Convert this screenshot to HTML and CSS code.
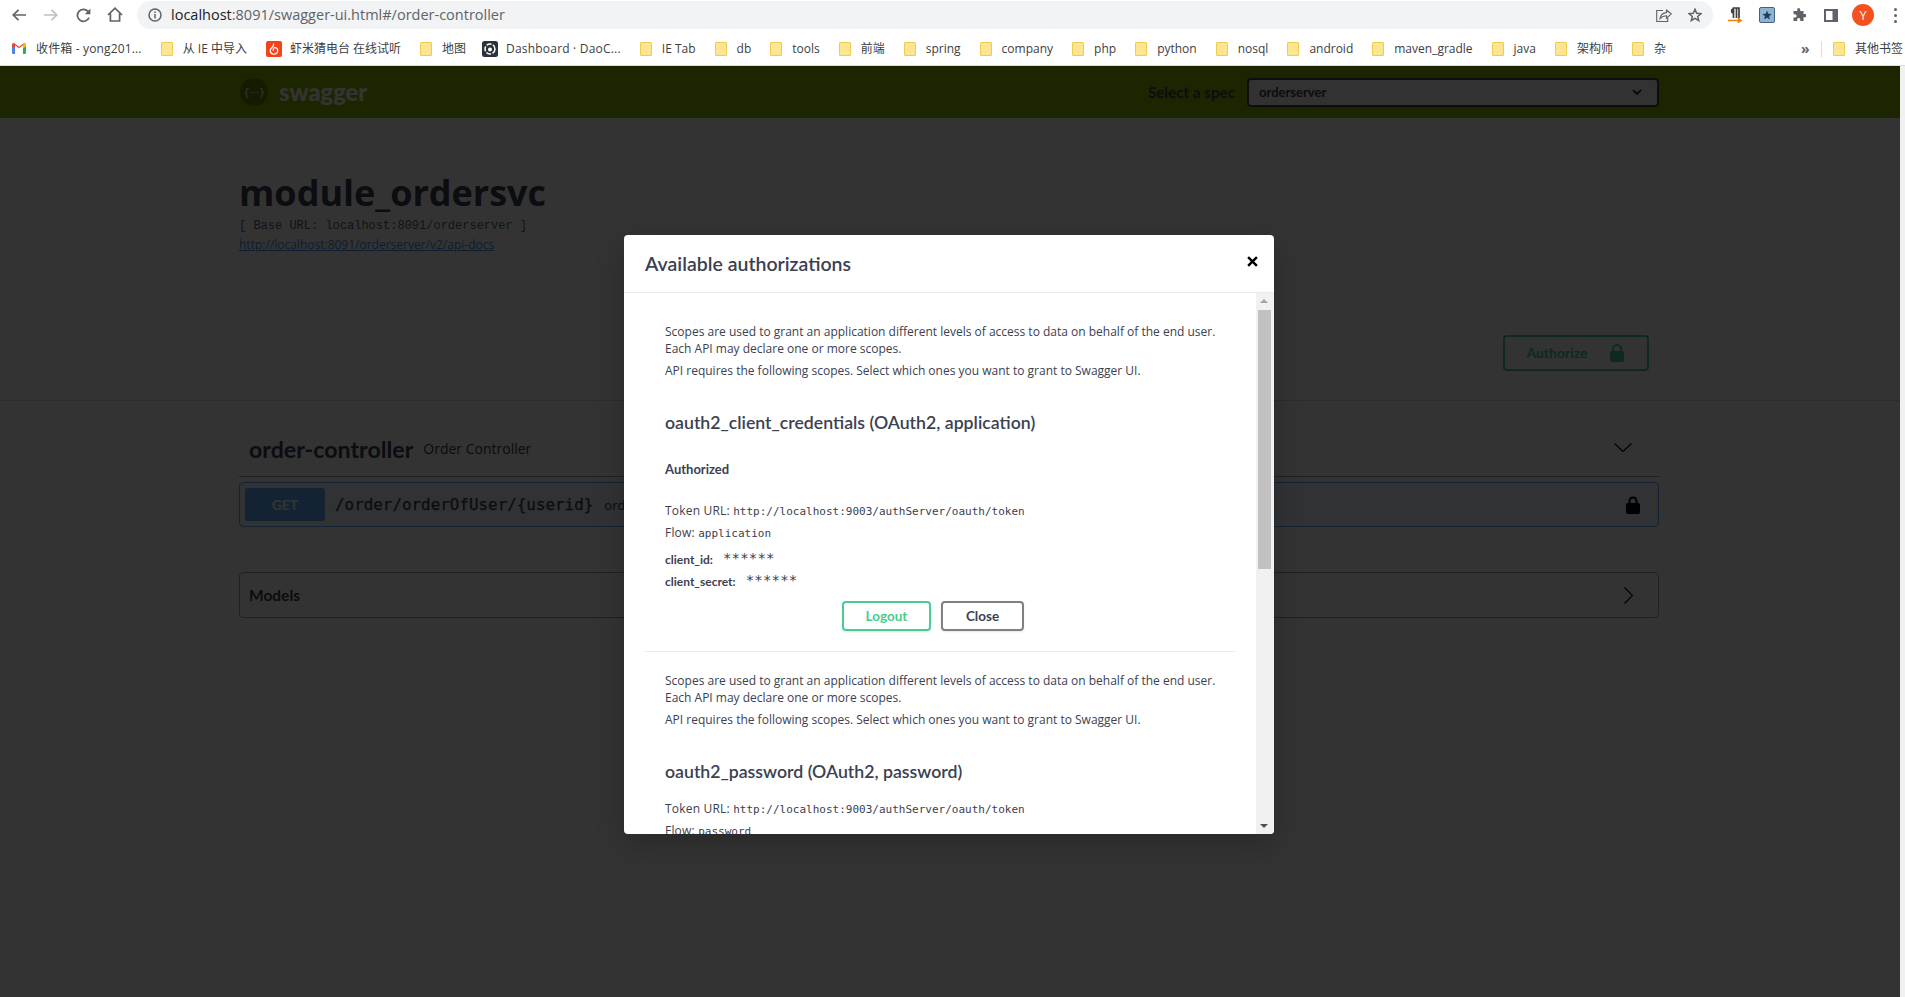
FILE: index.html
```html
<!DOCTYPE html>
<html lang="en">
<head>
<meta charset="utf-8">
<title>Swagger UI</title>
<link rel="stylesheet" href="styles.css">
</head>
<body>
<div class="browser">
  <header class="toolbar">
    <svg class="nav nav-back" viewBox="0 0 14 12"><path d="M14 6H1.5M6.5 .8 1.2 6l5.3 5.2" fill="none" stroke="#5f6368" stroke-width="1.7"/></svg>
    <svg class="nav nav-fwd" viewBox="0 0 14 12"><path d="M0 6h12.5M7.5 .8 12.8 6l-5.3 5.2" fill="none" stroke="#bdc1c6" stroke-width="1.7"/></svg>
    <svg class="nav nav-reload" viewBox="0 0 15 15"><path d="M13 9.600A6 6 0 1 1 11.800 3.200L13.600 5" fill="none" stroke="#5f6368" stroke-width="1.7"/><path d="M14.400 .6v5.600H8.800z" fill="#5f6368"/></svg>
    <svg class="nav nav-home" viewBox="0 0 16 15"><path d="M1 8 8 1.200 15 8M3.400 6.400V14h9.200V6.400" fill="none" stroke="#5f6368" stroke-width="1.7"/></svg>
    <div class="omnibox">
      <svg class="omni-info" viewBox="0 0 14 14"><circle cx="7" cy="7" r="6" fill="none" stroke="#5f6368" stroke-width="1.5"/><path d="M7 6v4.400M7 3.400v1.500" stroke="#5f6368" stroke-width="1.5"/></svg>
      <span class="url"><span class="url-host">localhost</span>:8091/swagger-ui.html#/order-controller</span>
      <svg class="omni-share" viewBox="0 0 16 13"><path d="M7 1.500H.7v11h11V9" fill="none" stroke="#5f6368" stroke-width="1.100"/><path d="M10.500 1v2.600C6.500 3.800 4.600 6 4 9.600 6 7.300 7.700 6.600 10.500 6.700v2.500L15.300 5z" fill="none" stroke="#5f6368" stroke-width="1.100"/></svg>
      <svg class="omni-star" viewBox="0 0 14 14"><path d="M7 1.300 8.700 5.200l4.200.4-3.200 2.800 1 4.200L7 10.400l-3.700 2.200 1-4.200L1.100 5.600l4.200-.4z" fill="none" stroke="#5f6368" stroke-width="1.500"/></svg>
    </div>
    <div class="ext-icons">
      <svg class="ext ext-para" viewBox="0 0 14 16"><path d="M5.500 11V1H11V11M8.500 1V11" fill="none" stroke="#3c4043" stroke-width="1.700"/><path d="M5.500 1.200a2.700 2.700 0 0 0 0 5.400z" fill="#3c4043"/><path d="M0 13.500h12M9.800 11.300 13 13.500l-3.200 2.200" fill="none" stroke="#f57c00" stroke-width="1.600"/></svg>
      <svg class="ext ext-fav" viewBox="0 0 16 16"><rect x=".5" y=".5" width="15" height="15" rx="1.500" fill="#8fb4cf" stroke="#48617a"/><path d="M8 3.600 9.300 6.700l3.300.3-2.500 2.200.8 3.300L8 10.700l-2.900 1.800.8-3.300L3.400 7l3.300-.3z" fill="#1d3f63"/></svg>
      <svg class="ext ext-puzzle" viewBox="0 0 14 14"><path d="M5.200 1.500a1.500 1.500 0 0 1 3 0V3h3.300v3.100H13a1.600 1.600 0 0 1 0 3.200h-1.500V13H8.300v-1.500a1.600 1.600 0 0 0-3.200 0V13H1.500V9.500H3a1.600 1.600 0 0 0 0-3.200H1.500V3h3.700z" fill="#5f6368"/></svg>
      <svg class="ext ext-side" viewBox="0 0 14 13"><rect x="1" y="1" width="12" height="11" fill="none" stroke="#5f6368" stroke-width="2"/><rect x="8.500" y="1" width="4.500" height="11" fill="#5f6368"/></svg>
      <span class="avatar">Y</span>
      <span class="dots"><i></i><i></i><i></i></span>
    </div>
  </header>

  <nav class="bookmarks">
    <div class="bm">
      <svg class="bm-ico gmail" viewBox="0 0 14 11"><path d="M0 2.500V9.800C0 10.500.5 11 1 11h2V5.200z" fill="#4285f4"/><path d="M14 2.500V9.800c0 .7-.5 1.200-1 1.200h-2V5.200z" fill="#34a853"/><path d="M0 1.800C0 .4 1.600-.4 2.700.4L7 3.800 11.300.4C12.400-.4 14 .4 14 1.800v1.400L11 5.400V2.200L7 5.200 3 2.200v3.200L0 3.200z" fill="#ea4335"/><path d="M11 2.200v3.200l3-2.200V1.800C14 .4 12.400-.4 11.300.4z" fill="#fbbc04"/></svg>
      <span class="bm-text bm-mail">收件箱 - yong201...</span>
    </div>
    <div class="bm"><i class="folder"></i><span class="bm-text">从 IE 中导入</span></div>
    <div class="bm">
      <svg class="bm-ico site" viewBox="0 0 16 16"><rect width="16" height="16" rx="2" fill="#f5431b"/><path d="M7.500 2.500C9 5 5 6 4.300 9c-.5 2.400 1.500 4.200 3.700 4.200s4-1.800 3.700-4c-.2-1.700-1.700-2.800-3-2.500-1.400.3-2 2-1.200 3.200" fill="none" stroke="#fff" stroke-width="1.200"/></svg>
      <span class="bm-text">虾米猜电台 在线试听</span>
    </div>
    <div class="bm"><i class="folder"></i><span class="bm-text">地图</span></div>
    <div class="bm bm-dash">
      <svg class="bm-ico site" viewBox="0 0 16 16"><rect width="16" height="16" rx="2.500" fill="#2b343e"/><circle cx="8" cy="8" r="5" fill="none" stroke="#fff" stroke-width="1.500" stroke-dasharray="5 1.500"/><circle cx="8" cy="8.500" r="2" fill="#fff"/></svg>
      <span class="bm-text">Dashboard · DaoC...</span>
    </div>
    <div class="bm"><i class="folder"></i><span class="bm-text">IE Tab</span></div>
    <div class="bm"><i class="folder"></i><span class="bm-text">db</span></div>
    <div class="bm"><i class="folder"></i><span class="bm-text">tools</span></div>
    <div class="bm"><i class="folder"></i><span class="bm-text">前端</span></div>
    <div class="bm"><i class="folder"></i><span class="bm-text">spring</span></div>
    <div class="bm"><i class="folder"></i><span class="bm-text">company</span></div>
    <div class="bm"><i class="folder"></i><span class="bm-text">php</span></div>
    <div class="bm"><i class="folder"></i><span class="bm-text">python</span></div>
    <div class="bm"><i class="folder"></i><span class="bm-text">nosql</span></div>
    <div class="bm"><i class="folder"></i><span class="bm-text">android</span></div>
    <div class="bm"><i class="folder"></i><span class="bm-text">maven_gradle</span></div>
    <div class="bm"><i class="folder"></i><span class="bm-text">java</span></div>
    <div class="bm"><i class="folder"></i><span class="bm-text">架构师</span></div>
    <div class="bm"><i class="folder"></i><span class="bm-text">杂</span></div>
    <div class="bm-end">
      <span class="more">»</span>
      <span class="bm-sep"></span>
      <div class="bm"><i class="folder"></i><span class="bm-text">其他书签</span></div>
    </div>
  </nav>

  <div class="viewport">
    <main class="page">
      <div class="topbar">
        <div class="topbar-inner">
          <div class="logo">
            <span class="logo-mark">{···}</span>
            <span class="logo-text">swagger</span>
          </div>
          <div class="spec">
            <span class="spec-label">Select a spec</span>
            <div class="spec-select">
              <span>orderserver</span>
              <svg class="spec-chev" viewBox="0 0 10 6"><path d="M1 1l4 4 4-4" fill="none" stroke="#000" stroke-width="1.500"/></svg>
            </div>
          </div>
        </div>
      </div>

      <div class="wrap">
        <section class="info">
          <h1 class="title">module_ordersvc</h1>
          <div class="base-url">[ Base URL: localhost:8091/orderserver ]</div>
          <a class="doc-link" href="#">http://localhost:8091/orderserver/v2/api-docs</a>
        </section>
      </div>

      <section class="schemes">
        <div class="wrap schemes-inner">
          <button class="authorize">
            <span>Authorize</span>
            <svg class="lock-ico" viewBox="0 0 14 18"><path d="M3 8V5a4 4 0 0 1 8 0v3" fill="none" stroke="#49cc90" stroke-width="2"/><rect y="7" width="14" height="11" rx="2" fill="#49cc90"/></svg>
          </button>
        </div>
      </section>

      <div class="wrap">
        <div class="tag">
          <span class="tag-name">order-controller</span>
          <span class="tag-desc">Order Controller</span>
          <svg class="tag-chev" viewBox="0 0 18 9"><path d="M.5.500 9 8.500 17.500.500" fill="none" stroke="#000" stroke-width="1.200"/></svg>
        </div>
        <div class="opblock">
          <span class="method">GET</span>
          <span class="path">/order/orderOfUser/{userid}</span>
          <span class="summary">ord</span>
          <svg class="op-lock" viewBox="0 0 14 18"><path d="M3.500 8V5a3.500 3.500 0 0 1 7 0v3" fill="none" stroke="#000" stroke-width="2"/><rect y="7" width="14" height="11" rx="2" fill="#000"/></svg>
        </div>
        <div class="models">
          <span class="models-name">Models</span>
          <svg class="models-chev" viewBox="0 0 9 17"><path d="M.5.500 8.500 8.500.5 16.500" fill="none" stroke="#000" stroke-width="1.200"/></svg>
        </div>
      </div>
    </main>
    <div class="page-scroll"></div>

    <div class="overlay">
      <div class="modal">
        <div class="modal-head">
          <h3 class="modal-title">Available authorizations</h3>
          <svg class="modal-close" viewBox="0 0 10 10"><path d="M1 1l8 8M9 1 1 9" stroke="#000" stroke-width="2.200"/></svg>
        </div>
        <div class="modal-body">
          <div class="modal-scroll">
            <div class="auth">
              <p class="desc">Scopes are used to grant an application different levels of access to data on behalf of the end user.<br>Each API may declare one or more scopes.</p>
              <p class="desc desc-next">API requires the following scopes. Select which ones you want to grant to Swagger UI.</p>
              <h4 class="auth-name">oauth2_client_credentials (OAuth2, application)</h4>
              <h6 class="authorized">Authorized</h6>
              <p class="line line-token">Token URL: <code>http://localhost:9003/authServer/oauth/token</code></p>
              <p class="line line-flow">Flow: <code>application</code></p>
              <p class="cred cred-first"><b>client_id:</b> <code>******</code></p>
              <p class="cred"><b>client_secret:</b> <code>******</code></p>
              <div class="auth-btns">
                <button class="btn btn-logout">Logout</button>
                <button class="btn btn-close">Close</button>
              </div>
            </div>
            <div class="auth auth-second">
              <p class="desc">Scopes are used to grant an application different levels of access to data on behalf of the end user.<br>Each API may declare one or more scopes.</p>
              <p class="desc desc-next">API requires the following scopes. Select which ones you want to grant to Swagger UI.</p>
              <h4 class="auth-name">oauth2_password (OAuth2, password)</h4>
              <p class="line line-token-b">Token URL: <code>http://localhost:9003/authServer/oauth/token</code></p>
              <p class="line line-flow">Flow: <code>password</code></p>
            </div>
          </div>
          <div class="scrollbar">
            <span class="sb-arrow sb-up"></span>
            <div class="sb-track"><div class="sb-thumb"></div></div>
            <span class="sb-arrow sb-down"></span>
          </div>
        </div>
      </div>
    </div>
  </div>
</div>
</body>
</html>
```

FILE: styles.css
```css
* { box-sizing: border-box; }
html, body { margin: 0; height: 100%; overflow: hidden; }
body { font-family: "Open Sans", "Noto Sans CJK SC", sans-serif; background: #fff; }
p, h1, h3, h4, h6 { margin: 0; }
svg { display: block; flex: none; }

.browser { display: flex; flex-direction: column; height: 997px; }

/* Browser toolbar */
.toolbar { display: flex; align-items: flex-start; height: 32px; padding: 1px 0 0 12px; background: #fff; }
.nav { margin-top: 7px; }
.nav-back { width: 14px; height: 12px; margin-top: 8px; }
.nav-fwd { width: 14px; height: 12px; margin: 8px 0 0 18px; }
.nav-reload { width: 15px; height: 15px; margin-left: 18px; }
.nav-home { width: 16px; height: 15px; margin: 6px 0 0 16px; }
.omnibox { display: flex; align-items: center; width: 1576px; height: 28px; margin-left: 14px; padding: 0 11px 0 11px; border-radius: 14px; background: #f1f3f4; }
.omni-info { width: 14px; height: 14px; }
.url { margin-left: 9px; font: 14.5px/20px "Open Sans", sans-serif; color: #5f6368; }
.url-host { color: #202124; }
.omni-share { width: 16px; height: 13px; margin-left: auto; }
.omni-star { width: 14px; height: 14px; margin-left: 16px; }
.ext-icons { display: flex; align-items: center; height: 28px; margin-left: 15px; }
.ext-para { width: 14px; height: 16px; }
.ext-fav { width: 16px; height: 16px; margin-left: 17px; }
.ext-puzzle { width: 14px; height: 14px; margin-left: 17px; }
.ext-side { width: 14px; height: 13px; margin-left: 18px; }
.avatar { display: flex; align-items: center; justify-content: center; width: 22px; height: 22px; margin-left: 14px; border-radius: 50%; background: #f4511e; color: #fff; font-size: 12px; }
.dots { display: flex; flex-direction: column; gap: 3px; margin-left: 20px; }
.dots i { display: block; width: 3px; height: 3px; border-radius: 50%; background: #5f6368; }

/* Bookmarks */
.bookmarks { display: flex; align-items: center; gap: 19px; height: 34px; padding: 0 2px 0 12px; border-bottom: 1px solid #dadce0; background: #fff; overflow: hidden; }
.bm { display: flex; align-items: center; gap: 10px; flex: none; }
.bm-text { font: 12px/16px "Open Sans", "Noto Sans CJK SC", sans-serif; color: #3c4043; white-space: nowrap; }
.bm-mail { letter-spacing: .15px; }
.bm-dash { margin-left: -3px; }
.bm-dash .bm-text { letter-spacing: .2px; }
.folder { display: block; width: 12px; height: 14px; border: 1px solid #f1cb51; border-radius: 1px; background: #fee58f; }
.bm-ico.gmail { width: 14px; height: 11px; }
.bm-ico.site { width: 16px; height: 16px; margin-right: -2px; }
.bm-end { display: flex; align-items: center; margin-left: auto; }
.more { width: 20px; font: bold 14px/16px "Open Sans", sans-serif; color: #5f6368; }
.bm-sep { width: 1px; height: 16px; margin-right: 11px; background: #dadce0; }

/* Swagger page */
.viewport { position: relative; display: flex; flex: 1; min-height: 0; }
.page { flex: 1; min-width: 0; background: #fff; color: #3b4151; }
.page-scroll { width: 5px; background: #f1f1f1; }
.wrap { width: 1420px; margin-left: 239px; }

.topbar { height: 52px; background: #89bf04; }
.topbar-inner { display: flex; align-items: center; justify-content: space-between; width: 1420px; height: 52px; margin-left: 240px; padding-right: 1px; }
.logo { display: flex; align-items: center; gap: 11px; }
.logo-mark { display: flex; align-items: center; justify-content: center; width: 28px; height: 28px; border-radius: 50%; background: #5f8700; color: #fff; font: 11px/1 "DejaVu Sans", sans-serif; letter-spacing: -.5px; }
.logo-text { font: 900 23.7px/28px "Lato", sans-serif; color: #fff; }
.spec { display: flex; align-items: center; gap: 12px; }
.spec-label { font: bold 15.2px/20px "Lato", sans-serif; color: #3b4151; }
.spec-select { display: flex; align-items: center; justify-content: space-between; width: 412px; height: 29px; padding: 0 15px 0 10px; border: 2px solid #41444e; border-radius: 4px; background: #f7f7f7; font: bold 13px/20px "Lato", sans-serif; color: #3b4151; }
.spec-chev { width: 10px; height: 6px; }

.info { padding-top: 53px; }
.title { font: bold 36px/44px "Open Sans", sans-serif; color: #3b4151; }
.base-url { margin-top: 3px; font: 12px/16px "Liberation Mono", monospace; color: #5a6070; }
.doc-link { display: block; margin-top: 1px; font: 12px/20px "Open Sans", sans-serif; color: #4990e2; }

.schemes { margin-top: 80px; height: 66px; border-bottom: 1px solid #dcdcdc; }
.schemes-inner { display: flex; justify-content: flex-end; padding-right: 10px; }
.authorize { display: flex; align-items: center; justify-content: center; gap: 22px; width: 146px; height: 36px; padding: 0 2px 0 0; border: 2px solid #49cc90; border-radius: 4px; background: transparent; font: bold 14px/18px "Lato", sans-serif; color: #49cc90; }
.lock-ico { width: 14px; height: 18px; }

.tag { display: flex; align-items: center; height: 76px; padding: 20px 0 0 10px; border-bottom: 1px solid #a1a5ae; }
.tag-name { font: bold 23.2px/30px "Lato", sans-serif; color: #3b4151; }
.tag-desc { margin-left: 10px; font: 14px/20px "Open Sans", sans-serif; color: #3b4151; }
.tag-chev { width: 18px; height: 9px; margin: -2px 27px 0 auto; }

.opblock { display: flex; align-items: center; height: 45px; margin-top: 5px; padding: 0 18px 0 5px; border: 1px solid #61affe; border-radius: 4px; background: rgba(97, 175, 254, .1); }
.method { display: flex; align-items: center; justify-content: center; width: 80px; height: 33px; border-radius: 3px; background: #61affe; font: 900 14px/18px "Lato", sans-serif; color: #fff; }
.path { margin-left: 10px; font: 15.9px/20px "DejaVu Sans Mono", monospace; color: #3b4151; -webkit-text-stroke: .25px #3b4151; }
.summary { margin-left: 11px; font: 13px/20px "Open Sans", sans-serif; color: #3b4151; }
.op-lock { width: 14px; height: 18px; margin-left: auto; }

.models { display: flex; align-items: center; justify-content: space-between; height: 46px; margin-top: 45px; padding: 0 25px 0 9px; border: 1px solid #a1a5ae; border-radius: 4px; }
.models-name { font: bold 15.5px/20px "Lato", sans-serif; color: #3b4151; }
.models-chev { width: 9px; height: 17px; }

/* Overlay + dialog */
.overlay { position: absolute; inset: 0 5px 0 0; display: flex; align-items: flex-start; justify-content: center; padding: 169px 2px 0 0; background: rgba(0, 0, 0, .8); }
.modal { display: flex; flex-direction: column; width: 650px; height: 599px; border-radius: 4px; background: #fff; box-shadow: 0 10px 30px rgba(0, 0, 0, .2); overflow: hidden; }
.modal-head { display: flex; align-items: center; justify-content: space-between; flex: none; height: 58px; padding: 0 16px 0 21px; border-bottom: 1px solid #ebebeb; }
.modal-title { font: 600 19.5px/28px "Lato", sans-serif; color: #3b4151; }
.modal-close { width: 11px; height: 11px; margin-top: -4px; }
.modal-body { display: flex; flex: 1; min-height: 0; }
.modal-scroll { flex: 1; min-width: 0; padding: 30px 20px 0 20px; overflow: hidden; }
.auth { padding: 0 20px 20px 21px; border-bottom: 1px solid #ebebeb; color: #3b4151; }
.auth-second { padding-top: 20px; border-bottom: 0; }
.desc { font: 12px/17px "Open Sans", sans-serif; white-space: nowrap; }
.desc-next { margin-top: 5px; }
.auth-name { margin-top: 32px; font: 600 17.7px/24px "Lato", sans-serif; }
.authorized { margin-top: 26px; font: bold 13px/16px "Lato", sans-serif; }
.line { font: 12px/16px "Open Sans", sans-serif; letter-spacing: .2px; white-space: nowrap; }
.line code { font: 11px/16px "DejaVu Sans Mono", monospace; letter-spacing: 0; }
.line-token { margin-top: 26px; }
.line-token-b { margin-top: 17px; }
.line-flow { margin-top: 5px; }
.cred { display: flex; align-items: baseline; gap: 10px; margin-top: 5px; font: 12px/16px "Lato", sans-serif; }
.cred code { position: relative; top: -1px; font: 14px/16px "DejaVu Sans Mono", monospace; letter-spacing: .2px; color: #3b4151; }
.cred-first { margin-top: 9px; }
.auth-btns { display: flex; justify-content: center; gap: 10px; margin-top: 11px; padding-right: 15px; }
.btn { height: 30px; padding: 0; border-radius: 4px; background: transparent; font: bold 13.5px/18px "Lato", sans-serif; box-shadow: 0 1px 2px rgba(0, 0, 0, .1); }
.btn-logout { width: 89px; border: 2px solid #49cc90; color: #49cc90; }
.btn-close { width: 83px; border: 2px solid #808080; color: #3b4151; }

.scrollbar { display: flex; flex-direction: column; flex: none; width: 18px; background: #f1f1f1; }
.sb-arrow { flex: none; height: 17px; position: relative; }
.sb-up::after, .sb-down::after { content: ""; position: absolute; left: 4px; border: 4px solid transparent; border-top: 0; }
.sb-up::after { top: 6px; border-bottom: 4px solid #a3a3a3; }
.sb-down::after { top: 7px; border-bottom: 0; border-top: 4px solid #505050; }
.sb-track { flex: 1; }
.sb-thumb { height: 259px; margin: 0 3px 0 2px; background: #c1c1c1; }
```
